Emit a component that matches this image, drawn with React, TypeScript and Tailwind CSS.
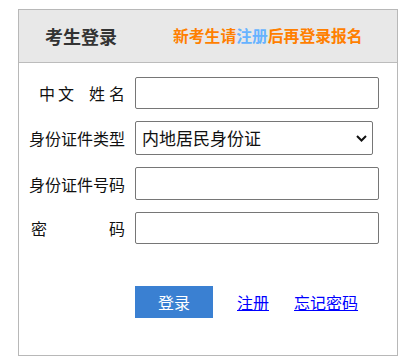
import React from "react";

const font = { fontFamily: '"Noto Sans CJK SC", "Noto Sans", sans-serif' };

function Label({ children }: { children: React.ReactNode }) {
  return (
    <div className="w-[106px] shrink-0 whitespace-nowrap text-[16px] leading-none text-[#111] flex items-center justify-end pr-[10px]">
      {children}
    </div>
  );
}

export default function App() {
  return (
    <div className="w-[406px] h-[362px] bg-white pt-[9px] pl-[18px]" style={font}>
      <div className="w-[380px] h-[347px] border border-[#b8b8b8] flex flex-col">
        <div className="h-[53px] bg-[#e8e8e8] border-b border-[#bcbcbc] flex items-center">
          <div className="pl-[26px] w-[154px] text-[18px] font-bold text-[#333]">考生登录</div>
          <div className="text-[15.8px] font-bold text-[#ff7f00] whitespace-nowrap">
            新考生请<span className="text-[#66b3ff]">注册</span>后再登录报名
          </div>
        </div>
        <div className="flex flex-col pt-[14px] pl-[10px] gap-[12px]">
          <div className="flex h-[32px]">
            <Label>
              <span className="flex w-full justify-end">
                <span className="mr-[3px]">中</span>
                <span className="mr-[15px]">文</span>
                <span className="mr-[4px]">姓</span>
                <span>名</span>
              </span>
            </Label>
            <input className="w-[244px] h-[32px] border border-[#767676] rounded-[2px] outline-none px-2 text-[16px]" />
          </div>
          <div className="flex h-[34px]">
            <Label>身份证件类型</Label>
            <div className="relative w-[238px] h-[34px]">
              <select
                className="appearance-none w-full h-full border border-[#767676] rounded-[2px] bg-white pl-[6px] text-[17px] text-[#111] outline-none"
                style={font}
                defaultValue="1"
              >
                <option value="1">内地居民身份证</option>
              </select>
              <svg
                className="absolute right-[6px] top-[14px] pointer-events-none"
                width="11"
                height="7"
                viewBox="0 0 11 7"
              >
                <path d="M1 1 L5.5 5.5 L10 1" stroke="#111" strokeWidth="2" fill="none" />
              </svg>
            </div>
          </div>
          <div className="flex h-[33px]">
            <Label>身份证件号码</Label>
            <input className="w-[244px] h-[33px] border border-[#767676] rounded-[2px] outline-none px-2 text-[16px]" />
          </div>
          <div className="flex h-[32px]">
            <Label>
              <span className="flex w-full justify-between pl-[2px]">
                <span>密</span>
                <span>码</span>
              </span>
            </Label>
            <input className="w-[244px] h-[32px] border border-[#767676] rounded-[2px] outline-none px-2 text-[16px]" />
          </div>
        </div>
        <div className="flex items-center pl-[116px] mt-[42px]">
          <button className="w-[78px] h-[32px] bg-[#3a80d2] text-white text-[16px]" style={font}>
            登录
          </button>
          <a href="#" className="ml-[24px] text-[16px] text-[#0000ff] underline">
            注册
          </a>
          <a href="#" className="ml-[25px] text-[16px] text-[#0000ff] underline">
            忘记密码
          </a>
        </div>
      </div>
    </div>
  );
}
